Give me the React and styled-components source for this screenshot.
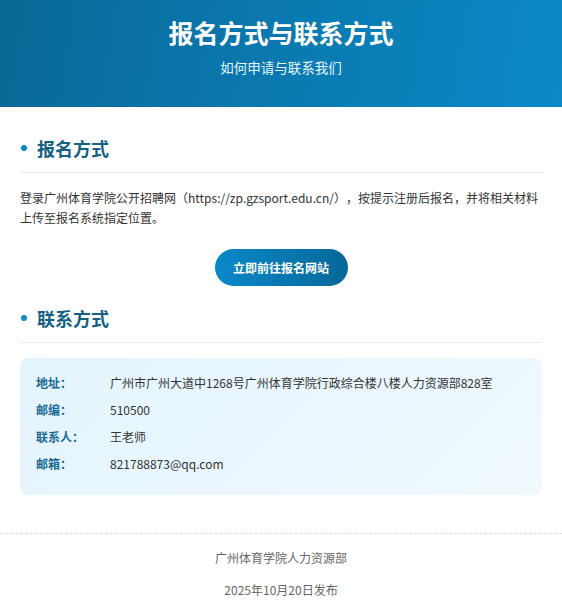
import styled, { createGlobalStyle } from 'styled-components'

const GlobalStyle = createGlobalStyle`
  body {
    margin: 0;
    background: #fff;
    font-family: "Noto Sans CJK SC", "Noto Sans", sans-serif;
    color: #333;
  }
`

const Header = styled.header`
  height: 107px;
  box-sizing: border-box;
  padding-top: 18px;
  text-align: center;
  color: #fff;
  background: linear-gradient(100deg, #0a6896 0%, #0a79b0 50%, #0a89c6 100%);
`

const Title = styled.h1`
  margin: 0;
  font-size: 25px;
  line-height: 29px;
  font-weight: 700;
`

const Subtitle = styled.p`
  margin: 10px 0 0;
  font-size: 13.5px;
  line-height: 20px;
  color: #e6f4fb;
`

const Main = styled.main`
  padding: 0 20px;
`

const SectionTitle = styled.h2`
  display: flex;
  align-items: center;
  gap: 10px;
  margin: ${(p) => p.$top}px 0 0;
  padding-bottom: 11px;
  border-bottom: 1px solid #ddeef8;
  font-size: 18px;
  line-height: 26px;
  font-weight: 700;
  color: #155f85;

  &::before {
    content: '';
    width: 6px;
    height: 6px;
    margin-left: 1px;
    border-radius: 50%;
    background: #0a88c5;
  }
`

const Paragraph = styled.p`
  margin: 15px 0 0;
  font-size: 12px;
  line-height: 20px;
  color: #333;
  text-spacing-trim: space-all;
`

const ButtonRow = styled.div`
  display: flex;
  justify-content: center;
  margin-top: 21px;
`

const LinkButton = styled.a`
  display: inline-flex;
  align-items: center;
  justify-content: center;
  width: 133px;
  height: 37px;
  border-radius: 19px;
  background: linear-gradient(90deg, #0a88c8 0%, #07689a 100%);
  color: #fff;
  font-size: 12px;
  font-weight: 700;
  text-decoration: none;
`

const Card = styled.div`
  margin-top: 15px;
  padding: 15px 16px 21px;
  border-radius: 8px;
  background: linear-gradient(135deg, #e4f4fc 0%, #f0f9ff 100%);
  display: grid;
  grid-template-columns: 74px 1fr;
  row-gap: 7px;
  font-size: 12px;
  line-height: 20px;
`

const Label = styled.span`
  color: #176a94;
  font-weight: 700;
`

const Value = styled.span`
  color: #333;
`

const Footer = styled.footer`
  margin-top: 38px;
  padding-top: 14px;
  border-top: 1px dashed #d9dde0;
  text-align: center;
  font-size: 12px;
  line-height: 20px;
  color: #666;

  p {
    margin: 0 0 12px;
  }
`

const contacts = [
  ['地址：', '广州市广州大道中1268号广州体育学院行政综合楼八楼人力资源部828室'],
  ['邮编：', '510500'],
  ['联系人：', '王老师'],
  ['邮箱：', '821788873@qq.com'],
]

const App = () => {
  return (
    <>
      <GlobalStyle />
      <Header>
        <Title>报名方式与联系方式</Title>
        <Subtitle>如何申请与联系我们</Subtitle>
      </Header>
      <Main>
        <SectionTitle $top={28}>报名方式</SectionTitle>
        <Paragraph>
          登录广州体育学院公开招聘网（https://zp.gzsport.edu.cn/），按提示注册后报名，并将相关材料上传至报名系统指定位置。
        </Paragraph>
        <ButtonRow>
          <LinkButton href="#">立即前往报名网站</LinkButton>
        </ButtonRow>
        <SectionTitle $top={19}>联系方式</SectionTitle>
        <Card>
          {contacts.map(([label, value]) => [
            <Label key={label}>{label}</Label>,
            <Value key={value}>{value}</Value>,
          ])}
        </Card>
      </Main>
      <Footer>
        <p>广州体育学院人力资源部</p>
        <p>2025年10月20日发布</p>
      </Footer>
    </>
  )
}

export default App
